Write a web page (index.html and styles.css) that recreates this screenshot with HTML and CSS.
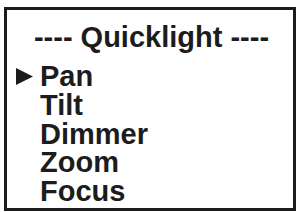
FILE: index.html
```html
<!DOCTYPE html>
<html lang="en">
<head>
    <meta charset="UTF-8">
    <meta name="viewport" content="width=device-width, initial-scale=1.0">
    <title>Quicklight</title>
    <link rel="stylesheet" href="styles.css">
</head>
<body>
    <div class="screen">
        <div class="screen-title">---- Quicklight ----</div>
        <ul class="menu">
            <li class="menu-item selected">
                <span class="cursor">
                    <svg width="17" height="17" viewBox="0 0 17 17"><polygon points="0,0 17,8.5 0,17" fill="#1c1c1c"/></svg>
                </span>
                Pan
            </li>
            <li class="menu-item"><span class="cursor"></span>Tilt</li>
            <li class="menu-item"><span class="cursor"></span>Dimmer</li>
            <li class="menu-item"><span class="cursor"></span>Zoom</li>
            <li class="menu-item"><span class="cursor"></span>Focus</li>
        </ul>
    </div>
</body>
</html>
```

FILE: styles.css
```css
/* Khung màn hình */
body {
    margin: 0;
    background-color: #ffffff;
    font-family: 'Liberation Sans', Arial, sans-serif;
}

.screen {
    margin: 7px 2px 1px 4px;
    height: 185.5px;
    border: 3px solid #1c1c1c;
    background-color: #ffffff;
    padding: 12.5px 0 0 9px;
    color: #1c1c1c;
    overflow: hidden;
}

/* Tiêu đề */
.screen-title {
    font-size: 29px;
    font-weight: bold;
    line-height: 29px;
    text-align: center;
    padding-right: 6px;
}

/* Danh sách menu */
.menu {
    list-style: none;
    margin: 10.7px 0 0 0;
    padding: 0;
}

.menu-item {
    display: flex;
    align-items: center;
    font-size: 29px;
    font-weight: bold;
    line-height: 28.7px;
    height: 28.7px;
}

.cursor {
    width: 24px;
    flex-shrink: 0;
    display: flex;
    align-items: center;
    padding-bottom: 1px;
}
```
